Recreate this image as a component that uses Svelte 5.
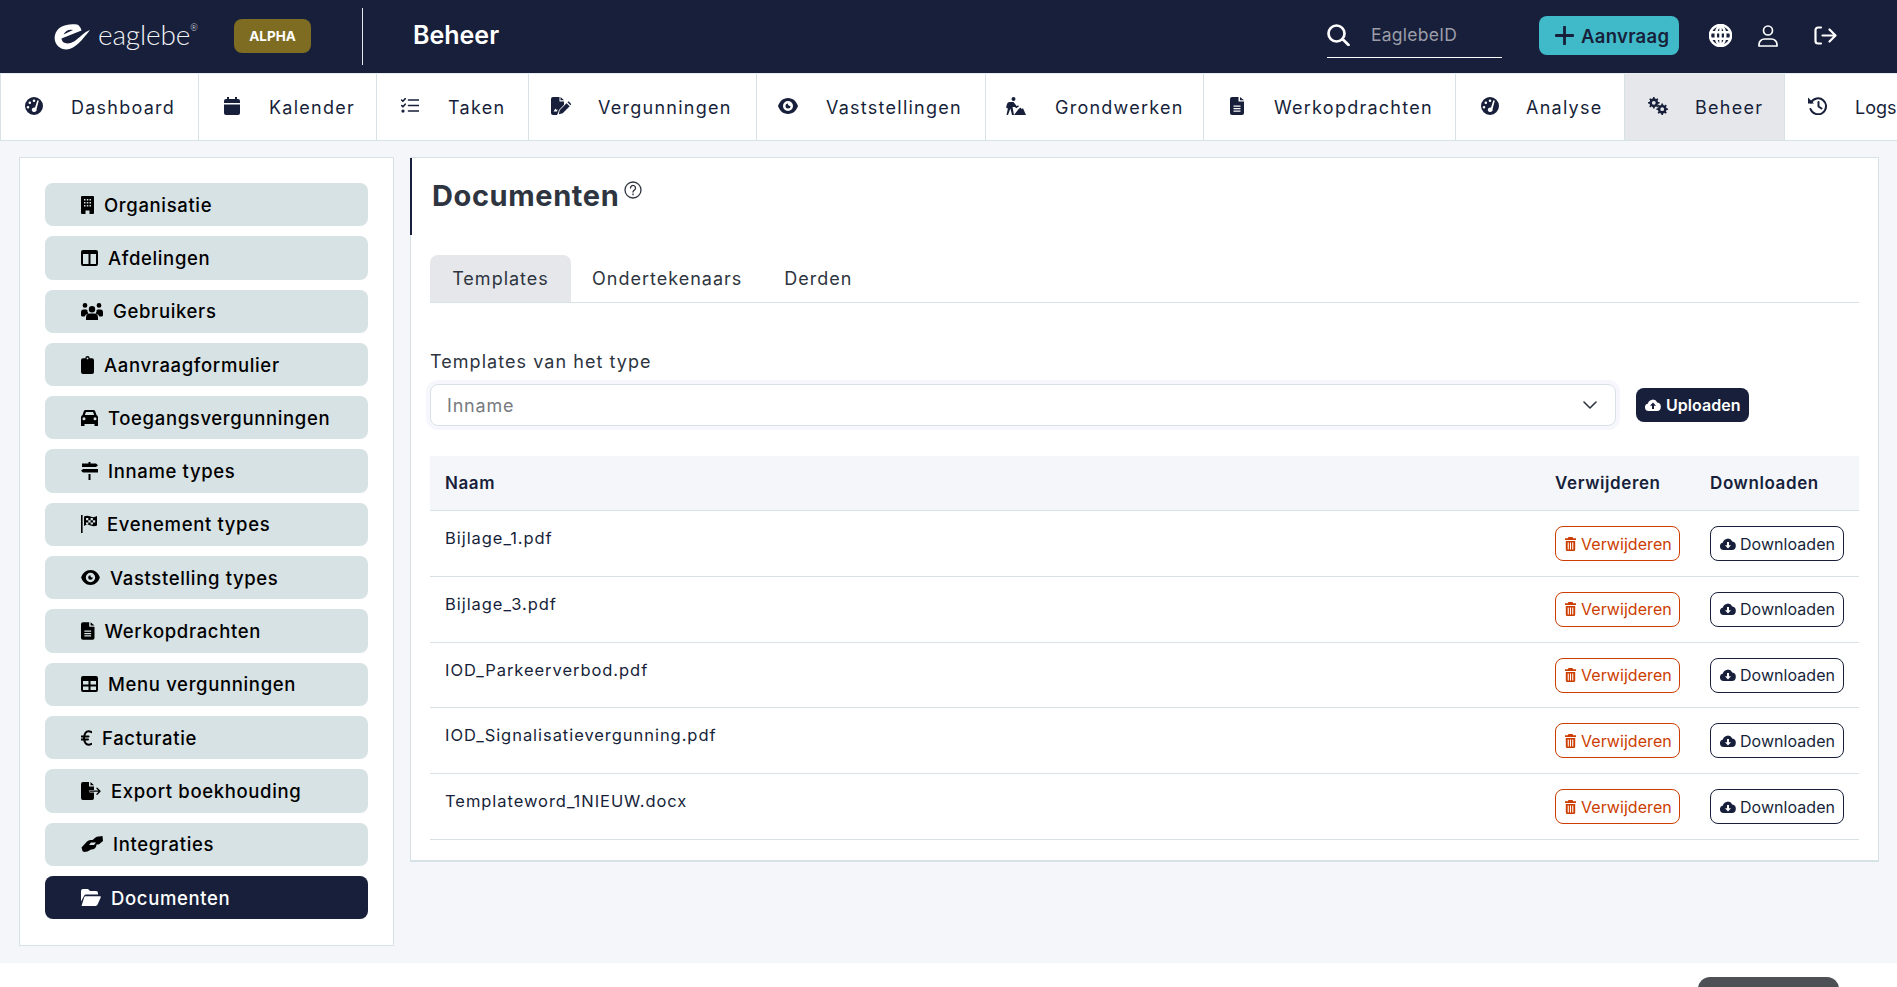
<script>
  function gear(cx, cy, r, hole, teeth = 8) {
    let d = '';
    const step = (Math.PI * 2) / teeth;
    for (let i = 0; i < teeth; i++) {
      const a = i * step;
      const pts = [
        [r * 0.74, a - step * 0.5],
        [r * 0.78, a - step * 0.26],
        [r, a - step * 0.16],
        [r, a + step * 0.16],
        [r * 0.78, a + step * 0.26]
      ];
      for (const [rr, t] of pts) {
        d += (d ? 'L' : 'M') + (cx + rr * Math.cos(t)).toFixed(2) + ' ' + (cy + rr * Math.sin(t)).toFixed(2);
      }
    }
    d += `zM${cx - hole} ${cy}a${hole} ${hole} 0 1 0 ${hole * 2} 0a${hole} ${hole} 0 1 0 ${-hole * 2} 0z`;
    return d;
  }

  const gaugeD =
    'M9 0a9 9 0 1 0 0 18A9 9 0 0 0 9 0zM9 2.4a1.3 1.3 0 1 1 0 2.6 1.3 1.3 0 0 1 0-2.6zM4.8 4.4a1.3 1.3 0 1 1 0 2.6 1.3 1.3 0 0 1 0-2.6zM3 9a1.3 1.3 0 1 1 0 2.6A1.3 1.3 0 0 1 3 9zM12.4 3.2l1.4.5-2.2 8.3a2.5 2.5 0 1 1-4.9 1 2.5 2.5 0 0 1 3.3-2.4z';
  const eyeD =
    'M10 0C5 0 1.5 3.6 0 8c1.5 4.400 5 8 10 8s8.500-3.600 10-8C18.500 3.600 15 0 10 0zM10 3a5 5 0 1 1 0 10 5 5 0 0 1 0-10zM10 5.500a2.500 2.500 0 1 0 2.500 2.500c-1 .5-3-1-2.500-2.500z';
  const fileD =
    'M2 0h6.500v4.500H14V16a2 2 0 0 1-2 2H2a2 2 0 0 1-2-2V2a2 2 0 0 1 2-2zM10 0l4 3.200h-4zM3.500 8.500h7v1.300h-7zM3.500 11h7v1.300h-7zM3.500 13.500h7v1.300h-7z';

  const icons = {
    gauge: { vb: '0 0 18 18', f: gaugeD },
    calendar: {
      vb: '0 0 16 18',
      f: 'M3 0h2v2h6V0h2v2h1a2 2 0 0 1 2 2v2H0V4a2 2 0 0 1 2-2h1zM0 7.500h16V16a2 2 0 0 1-2 2H2a2 2 0 0 1-2-2z'
    },
    tasks: {
      vb: '0 0 18 15',
      f: 'M2 11.500a1.600 1.600 0 1 1 0 3.200 1.600 1.600 0 0 1 0-3.200z',
      s: 'M7.500 2h10M7.500 7.500h10M7.500 13h10M.6 2l1.300 1.300L4.200.7M.6 7.500l1.300 1.300 2.300-2.600',
      sw: 1.6
    },
    fileSign: {
      vb: '0 0 20 18',
      f: 'M2 0h6.500v4.500H13v3.200L8 13l-.8 2.500L6 18H2a2 2 0 0 1-2-2V2a2 2 0 0 1 2-2zM9.500 0L13 3.200H9.500zM2.500 14.500l2-3 1 1.500 1-1-.4 2.500zM15.500 6.200l3.200 3-7 7-3.900 1 .9-3.900zM16.500 5.200l1-1 3 3-1 1z'
    },
    eye: { vb: '0 0 20 16', f: eyeD },
    digging: {
      vb: '0 0 20 18',
      f: 'M7.500 0a2 2 0 1 1 0 4 2 2 0 0 1 0-4zM3.500 5h4l3.300 4.200 1.300-1 .9 1.100-2.600 2-1.500-1.400H6.500L8 18H6l-1.600-6.500L2 18H.5l1.300-6.300-.6-.7L0 10.500 1 7q.6-2 2.500-2zM12 12.800l2.300-2.300 1.400 1.400 1.300-.6 3 6.700H8z'
    },
    file: { vb: '0 0 14 18', f: fileD },
    gears: { vb: '0 0 20 18', f: gear(5.800, 5.800, 5.800, 1.900) + gear(14.200, 12.200, 5.800, 1.900) },
    history: {
      vb: '0 0 19 18',
      f: 'M0 0.500V6.500H6z',
      s: 'M3 5.500A8 8 0 1 1 2.500 12M10.500 5v4.500l3 2',
      sw: 2
    },
    building: {
      vb: '0 0 13 18',
      f: 'M1 0h11a1 1 0 0 1 1 1v16a1 1 0 0 1-1 1H8.500v-3.500h-4V18H1a1 1 0 0 1-1-1V1a1 1 0 0 1 1-1zM3 3v1.500h1.500V3zM5.800 3v1.500h1.500V3zM8.500 3v1.500H10V3zM3 6v1.500h1.500V6zM5.800 6v1.500h1.500V6zM8.500 6v1.500H10V6zM3 9v1.500h1.500V9zM5.800 9v1.500h1.500V9zM8.500 9v1.500H10V9z'
    },
    columns: {
      vb: '0 0 17 16',
      f: 'M2 0h13a2 2 0 0 1 2 2v12a2 2 0 0 1-2 2H2a2 2 0 0 1-2-2V2a2 2 0 0 1 2-2zM2 4v10h5.500V4zM9.500 4v10H15V4z'
    },
    users: {
      vb: '0 0 22 18',
      f: 'M11 4a3.200 3.200 0 1 1 0 6.400A3.200 3.200 0 0 1 11 4zM5 18v-2.500a4 4 0 0 1 4-4h4a4 4 0 0 1 4 4V18zM4 1a2.400 2.400 0 1 1 0 4.800A2.400 2.400 0 0 1 4 1zM18 1a2.400 2.400 0 1 1 0 4.800A2.400 2.400 0 0 1 18 1zM0 10.500q0-3 2.500-3H5q.8 0 1.400.5-.3 2 1 3.400-3.300 1-3.800 3.100H1.500q-1.500 0-1.500-1.500zM22 10.500q0-3-2.500-3H17q-.8 0-1.400.5.3 2-1 3.400 3.300 1 3.800 3.100h2.100q1.500 0 1.500-1.500z'
    },
    clipboard: {
      vb: '0 0 13 18',
      f: 'M4.300 2.200a2.200 2.200 0 0 1 4.400 0H11a2 2 0 0 1 2 2V16a2 2 0 0 1-2 2H2a2 2 0 0 1-2-2V4.200a2 2 0 0 1 2-2zM6.500 1.500a.9.9 0 1 0 0 1.800.9.9 0 0 0 0-1.800z'
    },
    car: {
      vb: '0 0 17 16',
      f: 'M4.500 0h8q1.200 0 1.700 1.200L15.500 5Q17 5.700 17 7.500V16h-3.500v-2h-10v2H0V7.500Q0 5.700 1.500 5l1.300-3.800Q3.300 0 4.500 0zM5 2 3.800 5h9.400L12 2zM3 7.300a1.500 1.500 0 1 0 0 3 1.500 1.500 0 0 0 0-3zM14 7.300a1.500 1.500 0 1 0 0 3 1.500 1.500 0 0 0 0-3z'
    },
    signs: {
      vb: '0 0 17 18',
      f: 'M7.500 0h2v1.500H15l2 1.800L15 5H1V1.500h6.500zM2 7h15v3.500H2L0 8.800zM7.500 12h2v6h-2z'
    },
    flag: {
      vb: '0 0 16 18',
      f: 'M0 0h1.600v18H0zM3 1.500q3-1.500 6.500 0T16 1v9.500q-3 1.500-6.500 0T3 11zM5 3v2.300h2.300V3zM9.600 3v2.300h2.300V3zM7.300 5.300v2.300h2.300V5.300zM11.900 5.300v2.300h2.300V5.300zM5 7.600v2h2.300v-2zM9.600 7.600v2h2.300v-2z'
    },
    table: {
      vb: '0 0 17 16',
      f: 'M2 0h13a2 2 0 0 1 2 2v12a2 2 0 0 1-2 2H2a2 2 0 0 1-2-2V2a2 2 0 0 1 2-2zM2 5v3.500h5.500V5zM9.500 5v3.500H15V5zM2 10.500V14h5.500v-3.500zM9.500 10.500V14H15v-3.500z'
    },
    euro: {
      vb: '0 0 11 16',
      s: 'M10.500 2.200C8 .8 5.500 1.500 4.300 3.200 3.300 4.700 3 6.300 3 8s.3 3.300 1.300 4.800c1.200 1.700 3.700 2.400 6.200 1M.5 6.500h7M.5 9.500h6.500',
      sw: 2
    },
    fileExport: {
      vb: '0 0 20 18',
      f: 'M2 0h6v4.500h5V8H8.500v2.500H13V16a2 2 0 0 1-2 2H2a2 2 0 0 1-2-2V2a2 2 0 0 1 2-2zM9.500 0L13 3.200H9.500z',
      s: 'M9.500 9.200h9.500M16 6.200l3 3-3 3',
      sw: 1.300
    },
    handshake: {
      vb: '0 0 22 16',
      f: 'M.5 11.500 6 5.500Q7.500 4 9.500 4h2L14.500 1.500Q16 .3 18 .5L21.500 0 22 5 19.500 7Q18 9 15.500 8.500L15 11Q13 14 10 13.500L6.500 15.500 3 16 1.500 15zM10 6.500 8 9h5l2-2.500z'
    },
    folderOpen: {
      vb: '0 0 20 17',
      f: 'M0 2a2 2 0 0 1 2-2h5l2 2h6a2 2 0 0 1 2 2v1.600H5.200q-1.500 0-2.200 1.400L0 12.500zM4.500 7.200H19q1.300 0 .7 1.400l-3 6.700q-.6 1.700-2.200 1.700H1.500q-1.200 0-.7-1.100L3.300 8q.4-.8 1.200-.8z'
    },
    cloudUp: {
      vb: '0 0 16 12',
      f: 'M3.800 12a3.800 3.800 0 0 1-.9-7.500A5 5 0 0 1 12.300 3.500 4.300 4.300 0 0 1 12 12zM8 3.500 5 6.700h2V10h2V6.700h2z'
    },
    cloudDown: {
      vb: '0 0 16 12',
      f: 'M3.800 12a3.800 3.800 0 0 1-.9-7.500A5 5 0 0 1 12.300 3.500 4.300 4.300 0 0 1 12 12zM7 4v3.300H5L8 10.500l3-3.200H9V4z'
    },
    trash: {
      vb: '0 0 11 14',
      f: 'M3.500 0h4l.7 1.200H11V3H0V1.200h2.800zM.8 4h9.400v8.500a1.500 1.500 0 0 1-1.500 1.500H2.300a1.500 1.500 0 0 1-1.500-1.500zM2.700 5.500v7h1.100v-7zM4.950 5.500v7h1.100v-7zM7.200 5.500v7h1.100v-7z'
    },
    search: { vb: '0 0 23 22', s: 'M9.500 1.500a8 8 0 1 0 0 16 8 8 0 0 0 0-16zM15.500 15l6 6', sw: 2.700 },
    plus: { vb: '0 0 19 19', s: 'M9.500 1v17M1 9.500h17', sw: 2.800 },
    globe: {
      vb: '0 0 24 24',
      s: 'M12 1a11 11 0 1 0 0 22 11 11 0 0 0 0-22zM12 1C8 4 7 8 7 12s1 8 5 11c4-3 5-7 5-11s-1-8-5-11zM1.500 8.500h21M1.500 15.500h21M12 1v22',
      sw: 2.600
    },
    user: {
      vb: '0 0 20 22',
      s: 'M10 1a4.500 4.500 0 1 0 0 9 4.500 4.500 0 0 0 0-9zM1 21v-1.500A5.500 5.500 0 0 1 6.500 14h7a5.500 5.500 0 0 1 5.500 5.500V21z',
      sw: 1.700
    },
    logout: {
      vb: '0 0 23 19',
      s: 'M7 1.500H4A2.500 2.500 0 0 0 1.500 4v11A2.500 2.500 0 0 0 4 17.500h3M8.500 9.500H21M15.500 3.500l6 6-6 6',
      sw: 2.200
    },
    chevron: { vb: '0 0 14 9', s: 'M1 1l6 6 6-6', sw: 1.600 },
    help: {
      vb: '0 0 18 18',
      s: 'M9 1a8 8 0 1 0 0 16A8 8 0 0 0 9 1zM6.500 7a2.500 2.500 0 1 1 3.800 2.100c-.9.6-1.300 1-1.300 2M9 12.800v1',
      sw: 1.300
    },
    logo: {
      vb: '0 0 36 26',
      f: 'M23 .6C14-1 3 2 1 11c-2 7.500 4 14.500 11.500 14.500C20.500 25.500 29 15 36 6 30 8 26 13.500 20 17.500 14 21 8 19.500 7.500 14.500L27.500 6.500C27 4 25 1 23 .6zM9.500 10.500C11.500 6.500 15 5 19 6z'
    }
  };

  const nav = [
    { label: 'Dashboard', icon: 'gauge', w: 18, h: 18, width: 198, pad: 24, slot: 46 },
    { label: 'Kalender', icon: 'calendar', w: 16, h: 18, width: 178, pad: 25, slot: 45 },
    { label: 'Taken', icon: 'tasks', w: 18, h: 15, width: 152, pad: 24, slot: 47 },
    { label: 'Vergunningen', icon: 'fileSign', w: 20, h: 18, width: 227.5, pad: 22, slot: 47 },
    { label: 'Vaststellingen', icon: 'eye', w: 20, h: 16, width: 229, pad: 21.5, slot: 48 },
    { label: 'Grondwerken', icon: 'digging', w: 20, h: 18, width: 218.5, pad: 20.5, slot: 49 },
    { label: 'Werkopdrachten', icon: 'file', w: 14, h: 18, width: 252, pad: 26, slot: 44 },
    { label: 'Analyse', icon: 'gauge', w: 18, h: 18, width: 169, pad: 25, slot: 45 },
    { label: 'Beheer', icon: 'gears', w: 20, h: 18, width: 159.5, pad: 23, slot: 47, active: true },
    { label: 'Logs', icon: 'history', w: 19, h: 18, width: 200, pad: 23.5, slot: 47 }
  ];

  const side = [
    { label: 'Organisatie', icon: 'building', w: 13, h: 18 },
    { label: 'Afdelingen', icon: 'columns', w: 17, h: 16 },
    { label: 'Gebruikers', icon: 'users', w: 22, h: 18 },
    { label: 'Aanvraagformulier', icon: 'clipboard', w: 13, h: 18 },
    { label: 'Toegangsvergunningen', icon: 'car', w: 17, h: 16 },
    { label: 'Inname types', icon: 'signs', w: 17, h: 18 },
    { label: 'Evenement types', icon: 'flag', w: 16, h: 18 },
    { label: 'Vaststelling types', icon: 'eye', w: 19, h: 15 },
    { label: 'Werkopdrachten', icon: 'file', w: 13.500, h: 18 },
    { label: 'Menu vergunningen', icon: 'table', w: 17, h: 16 },
    { label: 'Facturatie', icon: 'euro', w: 11, h: 16 },
    { label: 'Export boekhouding', icon: 'fileExport', w: 20, h: 18 },
    { label: 'Integraties', icon: 'handshake', w: 22, h: 16 },
    { label: 'Documenten', icon: 'folderOpen', w: 20, h: 17, active: true }
  ];

  const files = [
    'Bijlage_1.pdf',
    'Bijlage_3.pdf',
    'IOD_Parkeerverbod.pdf',
    'IOD_Signalisatievergunning.pdf',
    'Templateword_1NIEUW.docx'
  ];
</script>

{#snippet ic(name, w, h)}
  {@const i = icons[name]}
  <svg class="ico" viewBox={i.vb} width={w} height={h} aria-hidden="true">
    {#if i.f}<path class="f" d={i.f} />{/if}
    {#if i.s}<path class="s" stroke-width={i.sw} d={i.s} />{/if}
  </svg>
{/snippet}

<div class="page">
  <header class="top">
    <div class="logo">
      {@render ic('logo', 36, 26)}
      <span class="word">eaglebe<sup>®</sup></span>
    </div>
    <span class="badge">ALPHA</span>
    <span class="divider"></span>
    <span class="section">Beheer</span>
    <div class="spacer"></div>
    <div class="search">
      {@render ic('search', 23, 22)}
      <span>EaglebeID</span>
    </div>
    <button class="request">
      {@render ic('plus', 19, 19)}
      <span>Aanvraag</span>
    </button>
    <span class="tool globe">{@render ic('globe', 23, 23)}</span>
    <span class="tool person">{@render ic('user', 20, 22)}</span>
    <span class="tool out">{@render ic('logout', 23, 19)}</span>
  </header>

  <nav class="nav">
    {#each nav as item}
      <div class="nav-item" class:active={item.active} style="width:{item.width}px;padding-left:{item.pad}px">
        <span class="slot" style="width:{item.slot}px">{@render ic(item.icon, item.w, item.h)}</span>
        <span>{item.label}</span>
      </div>
    {/each}
  </nav>

  <main class="content">
    <aside class="sidebar">
      {#each side as item}
        <div class="side-item" class:active={item.active}>
          {@render ic(item.icon, item.w, item.h)}
          <span>{item.label}</span>
        </div>
      {/each}
    </aside>

    <section class="panel">
      <div class="title-row">
        <h1>Documenten</h1>
        <span class="help">{@render ic('help', 18, 18)}</span>
      </div>

      <div class="tabs">
        <div class="tab current">Templates</div>
        <div class="tab">Ondertekenaars</div>
        <div class="tab">Derden</div>
      </div>

      <div class="label">Templates van het type</div>
      <div class="picker">
        <div class="select">
          <span>Inname</span>
          {@render ic('chevron', 14, 9)}
        </div>
        <button class="upload">
          {@render ic('cloudUp', 16, 12)}
          <span>Uploaden</span>
        </button>
      </div>

      <div class="table">
        <div class="row head">
          <div class="name">Naam</div>
          <div>Verwijderen</div>
          <div>Downloaden</div>
        </div>
        {#each files as file}
          <div class="row">
            <div class="name file">{file}</div>
            <div>
              <button class="action danger">
                {@render ic('trash', 11, 14)}
                <span>Verwijderen</span>
              </button>
            </div>
            <div>
              <button class="action">
                {@render ic('cloudDown', 16, 12)}
                <span>Downloaden</span>
              </button>
            </div>
          </div>
        {/each}
      </div>
    </section>
  </main>

  <footer class="foot">
    <div class="foot-btn"></div>
  </footer>
</div>

<style>
  :global(body) {
    margin: 0;
    overflow: hidden;
    font-family: Inter, 'Open Sans', sans-serif;
    color: #171f3a;
  }

  .page {
    width: 1897px;
    height: 987px;
    overflow: hidden;
    display: flex;
    flex-direction: column;
  }

  .ico {
    flex: none;
    display: block;
  }
  .f {
    fill: currentColor;
    fill-rule: evenodd;
  }
  .s {
    fill: none;
    stroke: currentColor;
    stroke-linecap: round;
    stroke-linejoin: round;
  }

  /* Top bar */
  .top {
    flex: none;
    height: 73px;
    background: #171f3a;
    color: #fff;
    display: flex;
    align-items: center;
    padding-left: 54px;
    box-sizing: border-box;
  }
  .logo {
    display: flex;
    align-items: center;
    gap: 8px;
    width: 180px;
  }
  .word {
    font-family: Lato, sans-serif;
    font-weight: 300;
    font-size: 28px;
    letter-spacing: -0.15px;
    line-height: 34px;
    margin-top: -6px;
    color: #f2f3f5;
  }
  .word sup {
    font-size: 9px;
    line-height: 0;
    vertical-align: 14px;
  }
  .badge {
    width: 77px;
    height: 34px;
    margin-top: -2px;
    border-radius: 8px;
    background: #7e6c23;
    font-size: 13.500px;
    font-weight: 700;
    display: flex;
    align-items: center;
    justify-content: center;
  }
  .divider {
    width: 1px;
    height: 57px;
    margin-left: 51px;
    background: #e8e9ec;
  }
  .section {
    margin-left: 50px;
    font-size: 25px;
    font-weight: 600;
    letter-spacing: 0;
    margin-top: -4px;
  }
  .spacer {
    flex: 1;
  }
  .search {
    width: 175px;
    height: 43px;
    margin-top: -1px;
    margin-right: 37px;
    box-sizing: border-box;
    border-bottom: 1px solid #fff;
    display: flex;
    align-items: center;
    gap: 21px;
    padding-bottom: 2px;
    font-size: 17.500px;
    letter-spacing: 0.25px;
    color: #9b9da9;
  }
  .search .ico {
    color: #fff;
  }
  .request {
    width: 140px;
    height: 39px;
    margin-top: -2px;
    margin-right: 30px;
    padding: 0 0 0 16px;
    border: 0;
    border-radius: 8px;
    background: #40bac8;
    color: #171f3a;
    display: flex;
    align-items: center;
    gap: 7px;
    font: 600 18.500px Inter, sans-serif;
    letter-spacing: 0.3px;
  }
  .tool {
    display: block;
    margin-top: -2px;
  }
  .person {
    margin-left: 26px;
  }
  .out {
    margin-left: 36px;
    margin-right: 60px;
  }

  /* Navigation */
  .nav {
    flex: none;
    height: 68px;
    display: flex;
    box-sizing: border-box;
    background: #fff;
    border-left: 1px solid #d7e2e6;
    border-top: 1px solid #e6ecef;
    border-bottom: 1px solid #d7e2e6;
  }
  .nav-item {
    flex: none;
    height: 100%;
    box-sizing: border-box;
    border-right: 1px solid #d7e2e6;
    display: flex;
    align-items: center;
    font-size: 18px;
    letter-spacing: 1.250px;
  }
  .nav-item:last-child {
    letter-spacing: 0;
  }
  .slot {
    flex: none;
    display: block;
    margin-top: -3px;
  }
  .nav-item.active {
    background: #e5e7ea;
  }

  /* Content */
  .content {
    flex: none;
    height: 822px;
    background: #f4f6fa;
    box-sizing: border-box;
    padding: 16px 18px 0 19px;
    display: flex;
    align-items: flex-start;
    gap: 16px;
  }
  .sidebar {
    flex: none;
    width: 375px;
    box-sizing: border-box;
    background: #fff;
    border: 1px solid #d7e2e6;
    padding: 25px 25px 26px;
    display: flex;
    flex-direction: column;
    gap: 10px;
  }
  .side-item {
    height: 43.300px;
    box-sizing: border-box;
    padding-left: 36px;
    border-radius: 8px;
    background: #d7e2e4;
    color: #000;
    display: flex;
    align-items: center;
    gap: 10px;
    font-size: 18.500px;
    font-weight: 500;
    letter-spacing: 0.65px;
  }
  .side-item.active {
    background: #171f3a;
    color: #fff;
  }

  .panel {
    flex: none;
    width: 1469px;
    box-sizing: border-box;
    background: #fff;
    border: 1px solid #d7e2e6;
    border-bottom-width: 2px;
    padding-bottom: 20px;
  }
  .title-row {
    height: 77px;
    margin-left: -1px;
    box-sizing: border-box;
    border-left: 2px solid #171f3a;
    padding: 18px 0 0 20px;
    display: flex;
    align-items: flex-start;
    gap: 5px;
    color: #2e3540;
  }
  h1 {
    margin: 0;
    font-size: 29px;
    line-height: 40px;
    font-weight: 700;
    letter-spacing: 0.6px;
  }
  .help {
    margin-top: 5px;
  }
  .tabs {
    margin: 20px 19px 0;
    height: 48px;
    box-sizing: border-box;
    border-bottom: 1px solid #d7e2e6;
    display: flex;
    font-size: 18px;
    color: #2e3540;
  }
  .tab {
    height: 47px;
    padding: 0 21px;
    box-sizing: border-box;
    display: flex;
    align-items: center;
    justify-content: center;
    letter-spacing: 1px;
  }
  .tab.current {
    width: 141px;
    padding: 0;
    background: #e5e7ea;
    border-radius: 8px 8px 0 0;
  }
  .label {
    margin: 47px 19px 0;
    height: 24px;
    line-height: 24px;
    font-size: 18px;
    letter-spacing: 1.05px;
    color: #2e3540;
  }
  .picker {
    margin: 10px 19px 0;
    display: flex;
    align-items: center;
    gap: 20px;
  }
  .select {
    width: 1186px;
    height: 42px;
    box-sizing: border-box;
    border: 1px solid #d7e2e6;
    border-radius: 8px;
    box-shadow: 0 0 0 4px #f7f6fc;
    padding: 0 18px 0 16px;
    display: flex;
    align-items: center;
    justify-content: space-between;
    font-size: 18px;
    letter-spacing: 0.8px;
    color: #777b80;
  }
  .select .ico {
    color: #30363f;
  }
  .upload {
    width: 113px;
    height: 34px;
    padding: 0 0 0 9px;
    border: 0;
    border-radius: 8px;
    background: #171f3a;
    color: #fff;
    display: flex;
    align-items: center;
    gap: 5px;
    font: 600 16px Inter, sans-serif;
    letter-spacing: 0.05px;
  }

  .table {
    margin: 30px 19px 0;
  }
  .row {
    display: grid;
    grid-template-columns: 1125px 155px 149px;
    height: 65.800px;
    box-sizing: border-box;
    border-bottom: 1px solid #d7e2e4;
    padding-top: 15px;
    font-size: 17px;
    letter-spacing: 0.4px;
  }
  .row.head {
    height: 55px;
    padding-top: 0;
    align-items: center;
    background: #f4f6fa;
    font-weight: 600;
    letter-spacing: 0.6px;
  }
  .name {
    padding-left: 15px;
  }
  .file {
    font-size: 16.500px;
    line-height: 24px;
    letter-spacing: 0.95px;
  }
  .action {
    height: 35px;
    width: 134px;
    padding: 0 0 0 9px;
    box-sizing: border-box;
    border: 1px solid #171f3a;
    border-radius: 8px;
    background: #fff;
    color: #171f3a;
    display: flex;
    align-items: center;
    gap: 4px;
    font: 400 16px Inter, sans-serif;
    letter-spacing: 0.05px;
  }
  .action.danger {
    width: 125px;
    gap: 5px;
    border-color: #cc3d00;
    color: #cc3d00;
  }

  /* Footer */
  .foot {
    flex: 1;
    background: #fff;
    display: flex;
    justify-content: flex-end;
    align-items: flex-start;
    padding: 14px 58px 0 0;
    overflow: hidden;
  }
  .foot-btn {
    width: 141px;
    height: 40px;
    border-radius: 12px 12px 0 0;
    background: #4d5054;
  }
</style>
